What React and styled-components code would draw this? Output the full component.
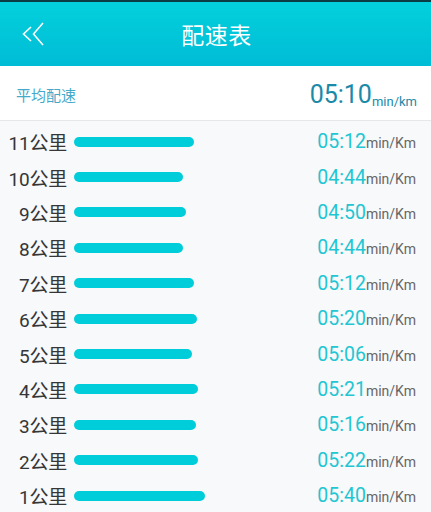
import React from "react";
import styled, { createGlobalStyle } from "styled-components";

const GlobalStyle = createGlobalStyle`
  html, body {
    margin: 0;
    padding: 0;
    background: #f7f9fb;
  }
  body {
    font-family: Roboto, "Noto Sans CJK SC", sans-serif;
  }
`;

const Page = styled.div`
  width: 431px;
  height: 512px;
  overflow: hidden;
  background: #f7f9fb;
`;

const Header = styled.header`
  position: relative;
  height: 64px;
  border-top: 2px solid #0b3c44;
  background: linear-gradient(180deg, #03d0dc 0%, #00bcd6 100%);
  display: flex;
  align-items: center;
  justify-content: center;
`;

const Back = styled.button`
  position: absolute;
  left: 20px;
  top: 18px;
  width: 30px;
  height: 28px;
  padding: 0;
  border: none;
  background: none;
  display: flex;
  align-items: center;
`;

const Title = styled.h1`
  margin: 0 0 0 2px;
  font-size: 23px;
  font-weight: 400;
  color: #fff;
  letter-spacing: 0.5px;
`;

const Summary = styled.div`
  height: 54px;
  background: #fff;
  border-bottom: 1px solid #e4e8ea;
  display: flex;
  align-items: center;
  justify-content: space-between;
  padding: 0 14px 0 16px;
`;

const SummaryLabel = styled.span`
  font-size: 15px;
  color: #45a9c9;
  margin-top: 3px;
`;

const SummaryValue = styled.span`
  font-size: 25px;
  color: #1b8aa8;
  margin-top: 2px;
`;

const Unit = styled.span`
  font-size: ${(p) => p.size}px;
  color: ${(p) => p.color};
  vertical-align: ${(p) => (p.sub ? "-3px" : "baseline")};
`;

const List = styled.ul`
  list-style: none;
  margin: 0;
  padding: 3px 0 0;
`;

const Row = styled.li`
  height: 35.4px;
  display: flex;
  align-items: center;
  padding-right: 15px;
`;

const Km = styled.span`
  width: 67px;
  text-align: right;
  font-size: 19px;
  color: #363636;
  letter-spacing: -0.2px;
`;

const BarTrack = styled.div`
  flex: 1;
  margin-left: 7px;
  display: flex;
`;

const Bar = styled.div`
  height: 10px;
  border-radius: 5px;
  background: #00cdda;
`;

const Pace = styled.span`
  font-size: 19.5px;
  color: #22c6d2;
`;

const splits = [
  ["11", "05:12"],
  ["10", "04:44"],
  ["9", "04:50"],
  ["8", "04:44"],
  ["7", "05:12"],
  ["6", "05:20"],
  ["5", "05:06"],
  ["4", "05:21"],
  ["3", "05:16"],
  ["2", "05:22"],
  ["1", "05:40"],
];

const toSec = (t) => {
  const [m, s] = t.split(":").map(Number);
  return m * 60 + s;
};

export default function App() {
  return (
    <Page>
      <GlobalStyle />
      <Header>
        <Back>
          <svg width="26" height="26" viewBox="0 0 26 26" fill="none" stroke="#fff" strokeWidth="1.6">
            <path d="M11 6 L3.5 13 L11 20" />
            <path d="M23 2 L13.5 13 L23 24" />
          </svg>
        </Back>
        <Title>配速表</Title>
      </Header>
      <Summary>
        <SummaryLabel>平均配速</SummaryLabel>
        <SummaryValue>
          05:10
          <Unit size={13} color="#1b8aa8" sub>
            min/km
          </Unit>
        </SummaryValue>
      </Summary>
      <List>
        {splits.map(([km, pace]) => (
          <Row key={km}>
            <Km>{km}公里</Km>
            <BarTrack>
              <Bar style={{ width: Math.round(toSec(pace) * 0.385) }} />
            </BarTrack>
            <Pace>
              {pace}
              <Unit size={14} color="#666">
                min/Km
              </Unit>
            </Pace>
          </Row>
        ))}
      </List>
    </Page>
  );
}
